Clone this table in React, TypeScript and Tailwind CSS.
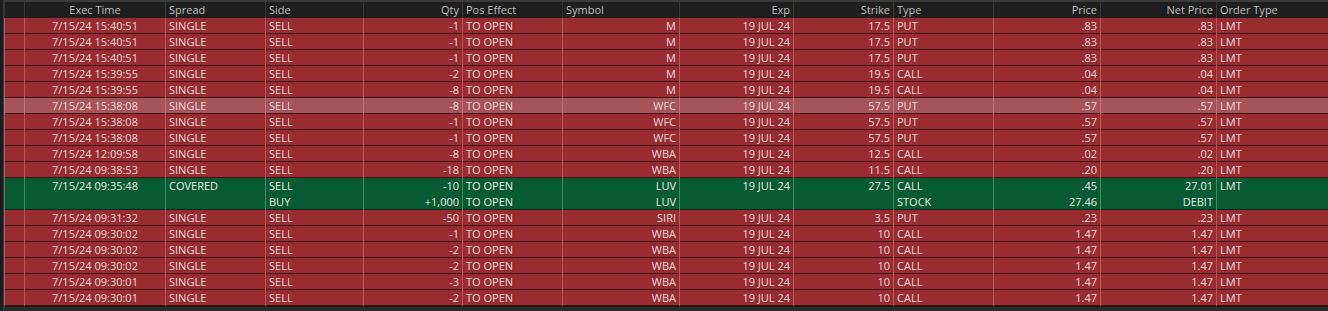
import React from 'react';

type Row = {
  time?: string;
  spread?: string;
  side: string;
  qty: string;
  pos: string;
  sym: string;
  exp?: string;
  strike?: string;
  type: string;
  price: string;
  net: string;
  order?: string;
};

const cols = [
  { key: 'blank', label: '', w: 'w-[20px]', align: 'text-left' },
  { key: 'time', label: 'Exec Time', w: 'w-[141px]', align: 'text-center' },
  { key: 'spread', label: 'Spread', w: 'w-[100px]', align: 'text-left' },
  { key: 'side', label: 'Side', w: 'w-[98px]', align: 'text-left' },
  { key: 'qty', label: 'Qty', w: 'w-[99px]', align: 'text-right' },
  { key: 'pos', label: 'Pos Effect', w: 'w-[100px]', align: 'text-left' },
  { key: 'sym', label: 'Symbol', w: 'w-[117px]', align: 'text-right' },
  { key: 'exp', label: 'Exp', w: 'w-[114px]', align: 'text-right' },
  { key: 'strike', label: 'Strike', w: 'w-[100px]', align: 'text-right' },
  { key: 'type', label: 'Type', w: 'w-[100px]', align: 'text-left' },
  { key: 'price', label: 'Price', w: 'w-[107px]', align: 'text-right' },
  { key: 'net', label: 'Net Price', w: 'w-[116px]', align: 'text-right' },
  { key: 'order', label: 'Order Type', w: 'w-[112px]', align: 'text-left' },
] as const;

const sell = (time: string, qty: string, sym: string, strike: string, type: string, price: string, exp = '19 JUL 24'): Row => ({
  time, spread: 'SINGLE', side: 'SELL', qty, pos: 'TO OPEN', sym, exp, strike, type, price, net: price, order: 'LMT',
});

const before: Row[] = [
  sell('7/15/24 15:40:51', '-1', 'M', '17.5', 'PUT', '.83'),
  sell('7/15/24 15:40:51', '-1', 'M', '17.5', 'PUT', '.83'),
  sell('7/15/24 15:40:51', '-1', 'M', '17.5', 'PUT', '.83'),
  sell('7/15/24 15:39:55', '-2', 'M', '19.5', 'CALL', '.04'),
  sell('7/15/24 15:39:55', '-8', 'M', '19.5', 'CALL', '.04'),
  sell('7/15/24 15:38:08', '-8', 'WFC', '57.5', 'PUT', '.57'),
  sell('7/15/24 15:38:08', '-1', 'WFC', '57.5', 'PUT', '.57'),
  sell('7/15/24 15:38:08', '-1', 'WFC', '57.5', 'PUT', '.57'),
  sell('7/15/24 12:09:58', '-8', 'WBA', '12.5', 'CALL', '.02'),
  sell('7/15/24 09:38:53', '-18', 'WBA', '11.5', 'CALL', '.20'),
];

const covered: Row[] = [
  { time: '7/15/24 09:35:48', spread: 'COVERED', side: 'SELL', qty: '-10', pos: 'TO OPEN', sym: 'LUV', exp: '19 JUL 24', strike: '27.5', type: 'CALL', price: '.45', net: '27.01', order: 'LMT' },
  { side: 'BUY', qty: '+1,000', pos: 'TO OPEN', sym: 'LUV', type: 'STOCK', price: '27.46', net: 'DEBIT' },
];

const after: Row[] = [
  sell('7/15/24 09:31:32', '-50', 'SIRI', '3.5', 'PUT', '.23'),
  sell('7/15/24 09:30:02', '-1', 'WBA', '10', 'CALL', '1.47'),
  sell('7/15/24 09:30:02', '-2', 'WBA', '10', 'CALL', '1.47'),
  sell('7/15/24 09:30:02', '-2', 'WBA', '10', 'CALL', '1.47'),
  sell('7/15/24 09:30:01', '-3', 'WBA', '10', 'CALL', '1.47'),
  sell('7/15/24 09:30:01', '-2', 'WBA', '10', 'CALL', '1.47'),
];

function Cells({ row, line }: { row: Row; line: string }) {
  return (
    <>
      {cols.map((c) => (
        <div
          key={c.key}
          className={`${c.w} ${c.align} shrink-0 h-[16px] leading-[16px] border-l ${line} px-[3px] whitespace-nowrap overflow-hidden`}
        >
          {c.key === 'blank' ? '' : (row as any)[c.key] ?? ''}
        </div>
      ))}
    </>
  );
}

function RedRow({ row, hi }: { row: Row; hi?: boolean }) {
  return (
    <div className={`flex h-[16px] ${hi ? 'bg-[#a6535a]' : 'bg-[#982c30]'} text-[#eddada] shadow-[inset_0_-1px_0_#3c1212]`}>
      <Cells row={row} line={hi ? 'border-[#c67479]' : 'border-[#b75a5c]'} />
    </div>
  );
}

export default function App() {
  return (
    <div className="w-[1328px] h-[311px] bg-[#2b2b2b] overflow-hidden text-[11px]" style={{ fontFamily: '"Open Sans", "Noto Sans", sans-serif' }}>
      <div className="flex h-full">
        <div className="w-[4px] shrink-0 bg-[#1c1c1c] border-r border-[#3a3a3a]" />
        <div className="flex flex-col w-[1324px]">
          <div className="h-[2px] bg-[#3a3a3a]" />
          {/* header */}
          <div className="flex h-[16px] bg-[#1e1e1e] text-[#bdbdbd]">
            {cols.map((c) => (
              <div
                key={c.key}
                className={`${c.w} shrink-0 h-[16px] leading-[16px] border-l border-[#383838] px-[3px] whitespace-nowrap ${c.key === 'sym' ? 'text-left' : c.align}`}
              >
                {c.label}
              </div>
            ))}
          </div>
          {before.map((r, i) => (
            <RedRow key={`b${i}`} row={r} hi={i === 5} />
          ))}
          <div className="flex flex-col bg-[#075a32] text-[#e3efe6] shadow-[inset_0_-1px_0_#0d2a1a]">
            {covered.map((r, i) => (
              <div key={`c${i}`} className="flex h-[16px]">
                <Cells row={r} line="border-[#3f8a62]" />
              </div>
            ))}
          </div>
          {after.map((r, i) => (
            <RedRow key={`a${i}`} row={r} />
          ))}
          <div className="flex-1 bg-[#2b2b2b] border-t border-[#151515]" />
        </div>
      </div>
    </div>
  );
}
